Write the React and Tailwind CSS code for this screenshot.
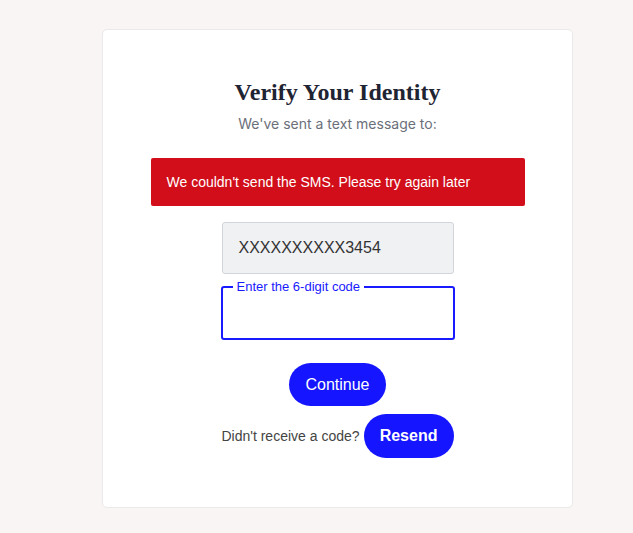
import React from 'react';

const App = () => {
  return (
    <div className="min-h-[533px] w-full bg-[#f9f5f4] pt-[29px] pl-[102px]" style={{ fontFamily: 'Arial, "Liberation Sans", sans-serif' }}>
      <div className="w-[471px] h-[479px] bg-white border border-[#ece9e9] rounded-[5px] flex flex-col items-center pt-[46px]">
        <h1 className="text-[24px] leading-[32px] font-bold text-[#1f2433]" style={{ fontFamily: '"Liberation Serif", serif' }}>
          Verify Your Identity
        </h1>
        <p className="mt-[6px] text-[14px] leading-[20px] text-[#6b6f7a]" style={{ fontFamily: 'Inter, sans-serif' }}>
          We've sent a text message to:
        </p>

        <div className="mt-[24px] w-[374px] h-[48px] bg-[#d10e19] rounded-[2px] flex items-center pl-[16px] text-white text-[14px]">
          We couldn't send the SMS. Please try again later
        </div>

        <div className="mt-[16px] w-[232px] h-[52px] bg-[#f0f1f3] border border-[#d1d4d9] rounded-[3px] flex items-center pl-[16px] text-[16px] text-[#333]">
          XXXXXXXXXX3454
        </div>

        <fieldset className="mt-[5px] w-[234px] h-[61px] border-2 border-[#1a1aff] rounded-[3px] px-[10px]">
          <legend className="px-[4px] text-[13px] leading-[15px] text-[#1a1aff]">Enter the 6-digit code</legend>
        </fieldset>

        <button className="mt-[23px] h-[43px] px-[16px] rounded-full bg-[#1515ff] text-white text-[16px]">
          Continue
        </button>

        <div className="mt-[8px] flex items-center gap-[4px]">
          <span className="text-[14px] text-[#444]">Didn't receive a code?</span>
          <button className="h-[44px] w-[90px] rounded-full bg-[#1515ff] text-white text-[16px] font-bold">
            Resend
          </button>
        </div>
      </div>
    </div>
  );
};

export default App;
